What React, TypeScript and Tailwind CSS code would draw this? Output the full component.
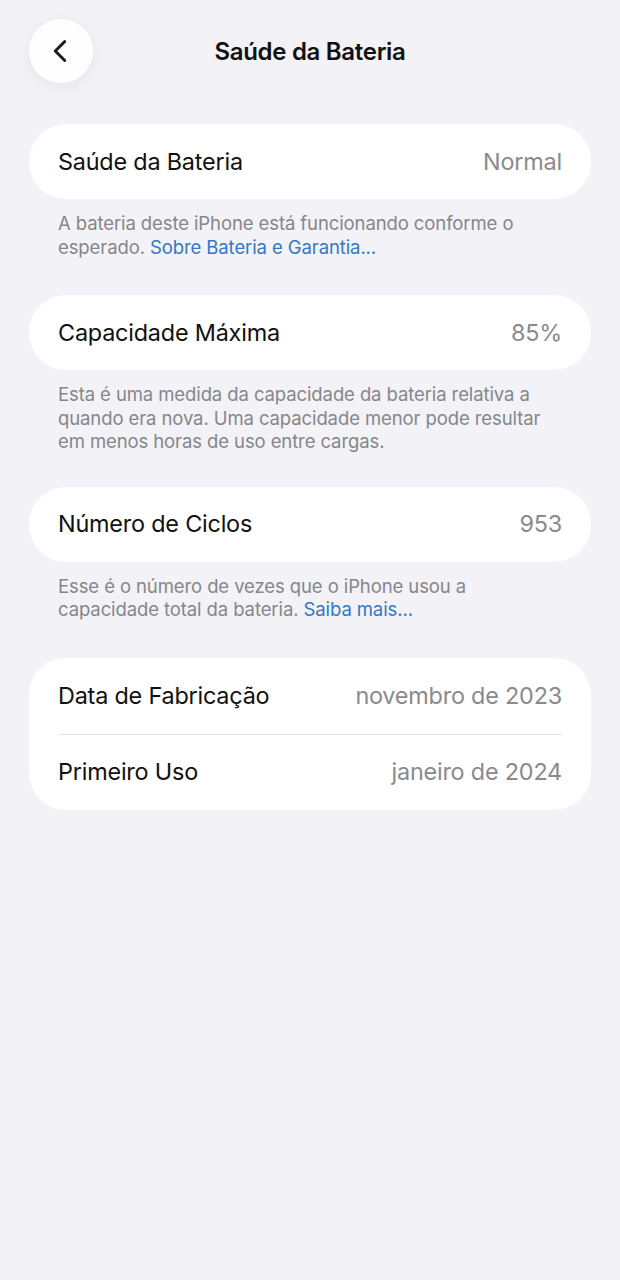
import { ChevronLeft } from "lucide-react";

type Row = { label: string; value: string };

function Card({ rows }: { rows: Row[] }) {
  return (
    <div className="bg-white rounded-[37px] px-[29px]">
      {rows.map((row, i) => (
        <div
          key={row.label}
          className={`flex items-center justify-between ${rows.length > 1 ? "h-[76px]" : "h-[75px]"} ${i > 0 ? "border-t border-[#e3e3e6]" : ""}`}
        >
          <span className="text-[23.4px] text-[#111111] tracking-[-0.2px]">{row.label}</span>
          <span className="text-[23.4px] text-[#8a8a8e] tracking-[-0.2px]">{row.value}</span>
        </div>
      ))}
    </div>
  );
}

function Footnote({ children }: { children: React.ReactNode }) {
  return (
    <p className="px-[29px] pt-[13px] text-[18.5px] leading-[23.5px] text-[#86868b] tracking-[-0.1px]">
      {children}
    </p>
  );
}

export default function App() {
  return (
    <div
      className="min-h-[1280px] w-full bg-[#f2f2f7]"
      style={{ fontFamily: "Inter, 'Noto Sans', sans-serif" }}
    >
      {/* Header */}
      <div className="relative h-[104px] flex items-center justify-center">
        <button className="absolute left-[29px] top-[19px] w-[64px] h-[64px] rounded-full bg-white/90 shadow-[0_4px_18px_rgba(0,0,0,0.06)] flex items-center justify-center">
          <ChevronLeft className="w-[38px] h-[38px] text-[#1c1c1e] -ml-[3px]" strokeWidth={1.9} />
        </button>
        <h1 className="text-[24px] font-semibold text-[#111111] tracking-[-0.3px]">
          Saúde da Bateria
        </h1>
      </div>

      <div className="px-[29px] pt-[20px]">
        <Card rows={[{ label: "Saúde da Bateria", value: "Normal" }]} />
        <Footnote>
          A bateria deste iPhone está funcionando conforme o
          <br />
          esperado. <span className="text-[#3478c6]">Sobre Bateria e Garantia...</span>
        </Footnote>

        <div className="mt-[36px]">
          <Card rows={[{ label: "Capacidade Máxima", value: "85%" }]} />
        </div>
        <Footnote>
          Esta é uma medida da capacidade da bateria relativa a
          <br />
          quando era nova. Uma capacidade menor pode resultar
          <br />
          em menos horas de uso entre cargas.
        </Footnote>

        <div className="mt-[33px]">
          <Card rows={[{ label: "Número de Ciclos", value: "953" }]} />
        </div>
        <Footnote>
          Esse é o número de vezes que o iPhone usou a
          <br />
          capacidade total da bateria. <span className="text-[#3478c6]">Saiba mais...</span>
        </Footnote>

        <div className="mt-[36px]">
          <Card
            rows={[
              { label: "Data de Fabricação", value: "novembro de 2023" },
              { label: "Primeiro Uso", value: "janeiro de 2024" },
            ]}
          />
        </div>
      </div>
    </div>
  );
}
